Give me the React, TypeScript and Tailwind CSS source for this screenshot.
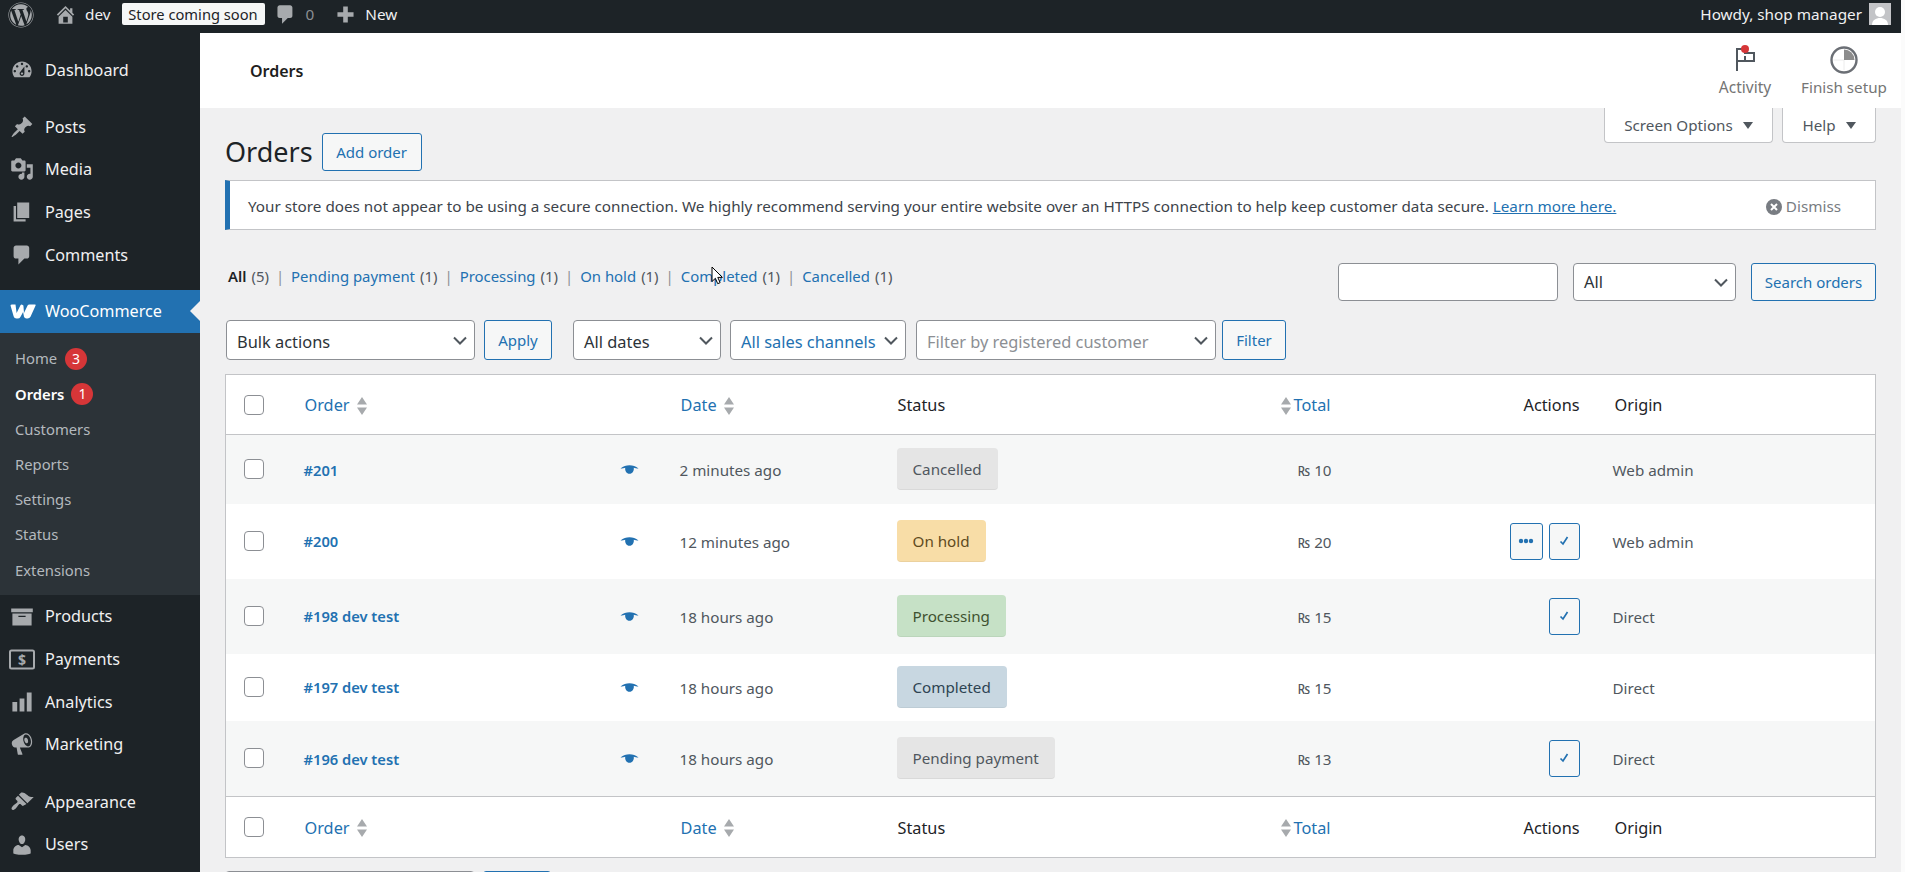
import React from "react";
import { FaWordpress } from "react-icons/fa";

const D: Record<string, string> = {
  dashboard:
    "M3.76 16h12.48c1.1-1.37 1.76-3.11 1.76-5 0-4.42-3.58-8-8-8s-8 3.58-8 8c0 1.89.66 3.63 1.76 5zM10 4c.55 0 1 .45 1 1s-.45 1-1 1-1-.45-1-1 .45-1 1-1zM6 6c.55 0 1 .45 1 1s-.45 1-1 1-1-.45-1-1 .45-1 1-1zm8 0c.55 0 1 .45 1 1s-.45 1-1 1-1-.45-1-1 .45-1 1-1zm-5.37 5.55L12 7v6c0 1.1-.9 2-2 2s-2-.9-2-2c0-.57.24-1.08.63-1.45zM4 10c.55 0 1 .45 1 1s-.45 1-1 1-1-.45-1-1 .45-1 1-1zm12 0c.55 0 1 .45 1 1s-.45 1-1 1-1-.45-1-1 .45-1 1-1zm-5 3c0-.55-.45-1-1-1s-1 .45-1 1 .45 1 1 1 1-.45 1-1z",
  post: "M10.44 3.02l1.82-1.82 6.36 6.35-1.83 1.82c-1.05-.68-2.48-.57-3.41.36l-.75.75c-.92.93-1.04 2.35-.35 3.41l-1.83 1.82-2.41-2.41-2.8 2.79c-.42.42-3.38 2.71-3.8 2.29s1.86-3.39 2.28-3.81l2.79-2.79L4.1 9.36l1.83-1.82c1.05.69 2.48.57 3.4-.36l.75-.75c.93-.92 1.05-2.35.36-3.41z",
  media:
    "M13 11V4c0-.55-.45-1-1-1h-1.67L9 1H5L3.67 3H2c-.55 0-1 .45-1 1v7c0 .55.45 1 1 1h10c.55 0 1-.45 1-1zM7 4.5c1.38 0 2.5 1.12 2.5 2.5S8.38 9.5 7 9.5 4.5 8.38 4.5 7 5.62 4.5 7 4.5zM14 6h5v10.5c0 1.38-1.12 2.5-2.5 2.5S14 17.88 14 16.5s1.12-2.5 2.5-2.5c.17 0 .34.02.5.05V9h-3V6zm-4 8.05V13h2v3.5c0 1.38-1.12 2.5-2.5 2.5S7 17.88 7 16.5 8.12 14 9.5 14c.17 0 .34.02.5.05z",
  page: "M6 15V2h10v13H6zm-1 1h8v2H3V5h2v11z",
  comment:
    "M5 2h9c1.1 0 2 .9 2 2v7c0 1.1-.9 2-2 2h-2l-5 5v-5H5c-1.1 0-2-.9-2-2V4c0-1.1.9-2 2-2z",
  home: "M16 8.5l1.53 1.53-1.06 1.06L10 4.62l-6.47 6.47-1.06-1.06L10 2.5l4 4v-2h2v4zm-6-2.46l6 5.99V18H4v-5.97zM12 17v-5H8v5h4z",
  plus: "M17 8v4h-5v5H8v-5H3V8h5V3h4v5h5z",
  archive: "M19 3v3H1V3h18zM2 7h16v10H2V7zm11 3V9H7v1h6z",
  chart: "M18 18V2h-4v16h4zm-6 0V7H8v11h4zm-6 0v-8H2v8h4z",
  megaphone:
    "M18.15 5.94c.46 1.62.38 3.22-.02 4.48-.42 1.28-1.26 2.18-2.3 2.48-.16.06-.26.06-.4.06-.06.02-.12.02-.18.02-.06.02-.14.02-.22.02H8.2l2.22 5.5c.02.14-.06.26-.14.34-.08.1-.24.16-.34.16H6.95c-.1 0-.26-.06-.34-.16-.08-.08-.16-.2-.14-.34l-1-5.5H4.25l-.02-.02c-.5.06-1.08-.18-1.54-.62s-.88-1.08-1.06-1.88c-.24-.8-.2-1.56-.02-2.2.2-.62.58-1.08 1.06-1.3l.02-.02 9-5.4c.1-.06.18-.1.24-.16.06-.04.14-.08.24-.12.16-.08.28-.12.5-.18 1.04-.3 2.24.1 3.22.98.98.9 1.84 2.24 2.26 3.86zm-2.58 5.98h-.02c.4-.1.74-.34 1.04-.7.58-.7.86-1.76.86-3.04-.02-.64-.1-1.3-.28-1.98-.34-1.36-1.02-2.5-1.78-3.24s-1.68-1.1-2.46-.88c-.82.22-1.4.96-1.7 2-.32 1.04-.28 2.36.06 3.72.38 1.36 1 2.5 1.8 3.24.78.74 1.62 1.1 2.48.88zm-2.54-7.08c.22-.04.42-.02.62.04.38.16.76.48 1.02 1s.42 1.2.42 1.78c0 .3-.04.56-.12.8-.18.48-.44.84-.86.94-.34.1-.8-.06-1.14-.4-.34-.32-.66-.8-.84-1.42-.32-.92-.3-1.92.12-2.4.24-.28.5-.34.78-.34z",
  brush:
    "M14.48 11.06L7.41 3.99l1.5-1.5c.5-.56 2.3-.47 3.51.32 1.21.8 1.43 1.28 2.91 2.1 1.18.64 2.45 1.26 4.45.85zm-.71.71L6.7 4.7 4.93 6.47c-.39.39-.39 1.02 0 1.41l1.06 1.06c.39.39.39 1.03 0 1.42-.6.6-1.43 1.11-2.21 1.69-.35.26-.7.53-1.01.84-1.34 1.34-1.9 2.72-1.2 3.42s2.08.14 3.42-1.2c.31-.31.58-.66.84-1.01.58-.78 1.09-1.61 1.69-2.21.39-.39 1.03-.39 1.42 0l1.06 1.06c.39.39 1.02.39 1.41 0z",
  users:
    "M10 9.25c-2.27 0-2.73-3.44-2.73-3.44C7 4.02 7.82 2 9.97 2c2.16 0 2.98 2.02 2.71 3.81 0 0-.41 3.44-2.68 3.44zm0 2.57L12.72 10c2.39 0 4.52 2.33 4.52 4.53v2.49s-3.65 1.13-7.24 1.13c-3.65 0-7.24-1.13-7.24-1.13v-2.49c0-2.25 1.94-4.48 4.47-4.48z",
};

function Dash({ n, className }: { n: string; className?: string }) {
  return (
    <svg viewBox="0 0 20 20" className={className} fill="currentColor" aria-hidden>
      <path d={D[n]} />
    </svg>
  );
}

function PaymentsIcon() {
  return (
    <svg viewBox="0 0 26 21" className="h-[21px] w-[26px] text-[#a7aaad]" aria-hidden>
      <rect x="1" y="1.5" width="24" height="18" rx="1.5" fill="none" stroke="currentColor" strokeWidth="2" />
      <text x="13" y="16" textAnchor="middle" fontSize="14" fontWeight="700" fontFamily="'Noto Sans',sans-serif" fill="currentColor">
        $
      </text>
    </svg>
  );
}

function WooIcon() {
  return (
    <svg viewBox="0 0 26 15" className="h-[15px] w-[26px] text-white" aria-hidden>
      <path
        fill="currentColor"
        d="M0.5 1.5 Q0.5 0.5 2 0.5 H5.5 L6.6 9 L10.6 1 Q11.3 0.3 12.2 0.7 L13.4 1.6 L14 9 L17.6 1.6 Q18 0.5 19.5 0.5 H25 Q26 0.5 25.6 1.6 L20.5 12.8 Q19.5 14.5 17.6 14.5 H16.4 Q14.6 14.5 14 12.8 L13.1 8 L10.4 13 Q9.6 14.5 7.6 14.5 H6.4 Q4.2 14.5 3.7 12.4 Z"
      />
    </svg>
  );
}

type Item = { label: string; icon: React.ReactNode };

function MenuRow({ label, icon }: { label: string; icon: React.ReactNode }) {
  return (
    <div className="flex h-[42.6px] items-center text-[16.2px] text-[#f0f0f1]">
      <span className="flex w-[45px] shrink-0 justify-center pr-[1px]">{icon}</span>
      <span>{label}</span>
    </div>
  );
}

const ic = "h-[24px] w-[24px] text-[#a7aaad]";

function Sidebar() {
  const sub = ["Home", "Orders", "Customers", "Reports", "Settings", "Status", "Extensions"];
  const group2: Item[] = [
    { label: "Posts", icon: <Dash n="post" className={ic} /> },
    { label: "Media", icon: <Dash n="media" className={ic} /> },
    { label: "Pages", icon: <Dash n="page" className={ic} /> },
    { label: "Comments", icon: <Dash n="comment" className={ic} /> },
  ];
  const group3: Item[] = [
    { label: "Products", icon: <Dash n="archive" className={ic} /> },
    { label: "Payments", icon: <PaymentsIcon /> },
    { label: "Analytics", icon: <Dash n="chart" className={ic} /> },
    { label: "Marketing", icon: <Dash n="megaphone" className={ic} /> },
  ];
  return (
    <aside className="w-[200px] shrink-0 bg-[#1d2327] pt-[16px]">
      <MenuRow label="Dashboard" icon={<Dash n="dashboard" className={ic} />} />
      <div className="mt-[14px]">
        {group2.map((g) => (
          <MenuRow key={g.label} label={g.label} icon={g.icon} />
        ))}
      </div>
      <div className="relative mt-[14px] flex h-[43px] items-center bg-[#2271b1] text-[16.2px] text-white">
        <span className="flex w-[45px] shrink-0 justify-center">
          <WooIcon />
        </span>
        <span>WooCommerce</span>
        <span className="absolute right-0 top-[11px] h-0 w-0 border-y-[10px] border-r-[10px] border-y-transparent border-r-[#f0f0f1]" />
      </div>
      <div className="bg-[#2c3338] pb-[8px] pt-[8px]">
        {sub.map((s) => (
          <div
            key={s}
            className={`flex h-[35.2px] items-center pl-[15px] text-[14.8px] ${
              s === "Orders" ? "font-semibold text-white" : "text-[#b4b9be]"
            }`}
          >
            <span>{s}</span>
            {s === "Home" && (
              <span className="ml-[8px] flex h-[22px] w-[22px] items-center justify-center rounded-full bg-[#d63638] text-[14px] font-normal text-white">
                3
              </span>
            )}
            {s === "Orders" && (
              <span className="ml-[7px] flex h-[22px] w-[22px] items-center justify-center rounded-full bg-[#d63638] text-[14px] font-normal text-white">
                1
              </span>
            )}
          </div>
        ))}
      </div>
      {group3.map((g) => (
        <MenuRow key={g.label} label={g.label} icon={g.icon} />
      ))}
      <div className="mt-[15px]">
        <MenuRow label="Appearance" icon={<Dash n="brush" className={ic} />} />
        <MenuRow label="Users" icon={<Dash n="users" className={ic} />} />
      </div>
    </aside>
  );
}

function TopBar() {
  return (
    <header className="flex h-[33px] items-center bg-[#1d2327] pb-[5px] text-[15.3px] text-[#f0f0f1]">
      <FaWordpress className="ml-[8px] mt-[1px] h-[26px] w-[26px] text-[#a7aaad]" />
      <Dash n="home" className="ml-[20px] h-[23px] w-[23px] text-[#a7aaad]" />
      <span className="ml-[8px]">dev</span>
      <span className="ml-[11px] flex h-[22px] w-[143px] items-center justify-center rounded-[2px] bg-[#f6f7f7] text-[14.7px] text-[#1d2327]">
        Store coming soon
      </span>
      <Dash n="comment" className="ml-[9px] h-[23px] w-[23px] text-[#a7aaad]" />
      <span className="ml-[9px] text-[#8c8f94]">0</span>
      <Dash n="plus" className="ml-[20px] h-[23px] w-[23px] text-[#a7aaad]" />
      <span className="ml-[8px]">New</span>
      <span className="ml-auto">Howdy, shop manager</span>
      <span className="ml-[7px] mr-[10px] flex h-[22px] w-[22px] items-end justify-center overflow-hidden bg-[#c3c4c7]">
        <svg viewBox="0 0 22 22" className="h-[22px] w-[22px]" aria-hidden>
          <circle cx="11" cy="9" r="5" fill="#fff" />
          <path d="M3 22c0-5 4-7 8-7s8 2 8 7z" fill="#fff" />
        </svg>
      </span>
    </header>
  );
}

function WooHeader() {
  return (
    <div className="flex h-[75px] items-center bg-white pl-[50px] pr-[14px]">
      <span className="text-[16px] font-semibold text-[#1e1e1e]">Orders</span>
      <div className="ml-auto flex items-start gap-[26px]">
        <div className="flex w-[60px] flex-col items-center text-[#757575]">
          <span className="relative block h-[32px] w-[24px]">
            <svg viewBox="0 0 24 24" className="mt-[6px] h-[24px] w-[24px]" fill="none" stroke="#50575e" strokeWidth="2" aria-hidden>
              <path d="M4 24V2h8v4h9v8h-9V9" />
              <path d="M4 14h8" />
            </svg>
            <span className="absolute left-[8px] top-[4px] h-[8px] w-[8px] rounded-full bg-[#d63638]" />
          </span>
          <span className="mt-[3px] whitespace-nowrap text-[15.5px]">Activity</span>
        </div>
        <div className="flex w-[86px] flex-col items-center text-[#757575]">
          <svg viewBox="0 0 30 30" className="mt-[4px] h-[30px] w-[30px]" aria-hidden>
            <circle cx="15" cy="15" r="12.500" fill="none" stroke="#6b6f75" strokeWidth="2.400" />
            <path d="M15 15V4.500A10.500 10.500 0 0 1 25.500 15z" fill="#8c8c8c" />
            <path d="M15 15v10M15 15H4.500" stroke="#ececec" strokeWidth="1" />
          </svg>
          <span className="mt-[1px] whitespace-nowrap text-[15.200px]">Finish setup</span>
        </div>
      </div>
    </div>
  );
}

function Chevron({ className }: { className?: string }) {
  return (
    <svg viewBox="0 0 14 9" className={`h-[9px] w-[14px] ${className ?? ""}`} fill="none" stroke="#50575e" strokeWidth="2" aria-hidden>
      <path d="M1 1.500l6 6 6-6" />
    </svg>
  );
}

function Select({ text, w, color }: { text?: string; w: string; color?: string }) {
  return (
    <div className={`flex h-[40px] items-center justify-between rounded-[4px] border border-[#8c8f94] bg-white pl-[10px] pr-[7px] ${w}`}>
      <span className={`whitespace-nowrap pt-[4px] text-[16.4px] ${color ?? "text-[#2c3338]"}`}>{text}</span>
      <Chevron />
    </div>
  );
}

function Btn({ text, w, h }: { text: string; w: string; h?: string }) {
  return (
    <button className={`flex items-center justify-center rounded-[3px] border border-[#2271b1] bg-[#f6f7f7] pt-[1px] text-[15px] text-[#2271b1] ${w} ${h ?? "h-[40px]"}`}>
      {text}
    </button>
  );
}

function Sort() {
  return (
    <svg viewBox="0 0 10 18" className="h-[18px] w-[10px] text-[#a7aaad]" fill="currentColor" aria-hidden>
      <path d="M5 0l5 7.500H0zM5 18L0 10.500h10z" />
    </svg>
  );
}

function Box() {
  return (
    <input
      type="checkbox"
      readOnly
      className="block h-[20px] w-[20px] appearance-none rounded-[4px] border border-[#8c8f94] bg-white"
    />
  );
}

function HeadRow({ top }: { top?: boolean }) {
  const th = "pt-[2px] text-left text-[16.3px] font-normal";
  return (
    <tr className={top ? "h-[60px] border-b border-[#c3c4c7]" : "h-[61px] border-t border-[#c3c4c7]"}>
      <th className="pl-[18px]">
        <Box />
      </th>
      <th className={`${th} pl-[13px]`} colSpan={2}>
        <span className="flex items-center gap-[7px] text-[#2271b1]">
          Order <Sort />
        </span>
      </th>
      <th className={`${th} pl-[16px]`}>
        <span className="flex items-center gap-[7px] text-[#2271b1]">
          Date <Sort />
        </span>
      </th>
      <th className={`${th} pl-[16px] text-[#1d2327]`}>Status</th>
      <th className={`${th} pr-[14px]`}>
        <span className="flex items-center justify-end gap-[3px] text-[#2271b1]">
          <Sort /> Total
        </span>
      </th>
      <th className={`${th} pr-[18px] text-right text-[#1d2327]`}>Actions</th>
      <th className={`${th} pl-[17px] text-[#1d2327]`}>Origin</th>
    </tr>
  );
}

function Eye() {
  return (
    <svg viewBox="0 0 20 9" className="mx-auto h-[9px] w-[19px] text-[#2271b1]" fill="currentColor" aria-hidden>
      <path d="M0.500 3.500C3.500 1 6.500 0 10 0s6.500 1 9.500 3.500C17.500 3.200 15.500 2.800 14.500 2.600 15 6 13 9 10 9S5 6 5.500 2.600C4.500 2.800 2.500 3.200 0.500 3.500z" />
    </svg>
  );
}

function ActionBtn({ kind }: { kind: "dots" | "check" }) {
  return (
    <span
      className={`flex h-[37px] items-center justify-center rounded-[3px] border border-[#2271b1] bg-[#f6f7f7] ${
        kind === "dots" ? "w-[33px]" : "w-[31px]"
      }`}
    >
      {kind === "dots" ? (
        <svg viewBox="0 0 16 6" className="mb-[1px] h-[6px] w-[16px]" fill="#2271b1" aria-hidden>
          <circle cx="3" cy="3" r="2.200" />
          <circle cx="8" cy="3" r="2.200" />
          <circle cx="13" cy="3" r="2.200" />
        </svg>
      ) : (
        <svg viewBox="0 0 10 10" className="mb-[1px] h-[10px] w-[10px]" fill="none" stroke="#2271b1" strokeWidth="1.700" aria-hidden>
          <path d="M1.500 5.500l2.500 2.500 4.500-7" />
        </svg>
      )}
    </span>
  );
}

type Row = {
  id: string;
  date: string;
  status: string;
  badge: string;
  total: string;
  origin: string;
  actions: ("dots" | "check")[];
  rowCls: string;
};

const rows: Row[] = [
  { id: "#201", date: "2 minutes ago", status: "Cancelled", badge: "bg-[#e5e5e5] text-[#50575e]", total: "₨ 10", origin: "Web admin", actions: [], rowCls: "h-[69px] bg-[#f6f7f7]" },
  { id: "#200", date: "12 minutes ago", status: "On hold", badge: "bg-[#f8dda7] text-[#5f4a1e]", total: "₨ 20", origin: "Web admin", actions: ["dots", "check"], rowCls: "h-[75px] bg-white" },
  { id: "#198 dev test", date: "18 hours ago", status: "Processing", badge: "bg-[#c6e1c6] text-[#3f5230]", total: "₨ 15", origin: "Direct", actions: ["check"], rowCls: "h-[75px] bg-[#f6f7f7]" },
  { id: "#197 dev test", date: "18 hours ago", status: "Completed", badge: "bg-[#c8d7e1] text-[#2e4453]", total: "₨ 15", origin: "Direct", actions: [], rowCls: "h-[67px] bg-white" },
  { id: "#196 dev test", date: "18 hours ago", status: "Pending payment", badge: "bg-[#e5e5e5] text-[#50575e]", total: "₨ 13", origin: "Direct", actions: ["check"], rowCls: "h-[76px] bg-[#f6f7f7]" },
];

function OrdersTable() {
  return (
    <table className="mt-[14px] w-full table-fixed border-collapse border border-[#c3c4c7] bg-white">
      <colgroup>
        <col className="w-[66px]" />
        <col className="w-[303px]" />
        <col className="w-[70px]" />
        <col className="w-[217px]" />
        <col className="w-[318px]" />
        <col className="w-[145px]" />
        <col className="w-[253px]" />
        <col />
      </colgroup>
      <thead>
        <HeadRow top />
      </thead>
      <tbody>
        {rows.map((r) => (
          <tr key={r.id} className={r.rowCls}>
            <td className="pl-[18px]">
              <Box />
            </td>
            <td className="pl-[12px] pt-[1px] text-[14.700px] font-semibold text-[#2271b1]">{r.id}</td>
            <td>
              <Eye />
            </td>
            <td className="pl-[15px] pt-[3px] text-[15.200px] text-[#50575e]">{r.date}</td>
            <td className="pl-[15px]">
              <span className={`inline-flex h-[42px] items-center rounded-[4px] border-b border-black/5 px-[16px] pt-[1px] text-[15.200px] ${r.badge}`}>
                {r.status}
              </span>
            </td>
            <td className="pr-[13px] pt-[3px] text-right text-[15.200px] text-[#50575e]">{r.total}</td>
            <td className="pr-[18px]">
              <div className="flex justify-end gap-[6px]">
                {r.actions.map((a, i) => (
                  <ActionBtn key={i} kind={a} />
                ))}
              </div>
            </td>
            <td className="pl-[15px] pt-[3px] text-[15.200px] text-[#50575e]">{r.origin}</td>
          </tr>
        ))}
      </tbody>
      <tfoot>
        <HeadRow />
      </tfoot>
    </table>
  );
}

function Filters() {
  const links = [
    ["Pending payment", "(1)"],
    ["Processing", "(1)"],
    ["On hold", "(1)"],
    ["Completed", "(1)"],
    ["Cancelled", "(1)"],
  ];
  return (
    <div className="mt-[33px] flex h-[38px] items-start justify-between">
      <div className="ml-[3px] mt-[2px] flex items-center text-[14.900px] text-[#50575e]">
        <span className="font-semibold text-[#1d2327]">All</span>
        <span className="ml-[5px]">(5)</span>
        {links.map(([a, b]) => (
          <span key={a} className="flex items-center">
            <span className="mx-[7px] text-[#8c8f94]">|</span>
            <span className="text-[#2271b1]">{a}</span>
            <span className="ml-[5px]">{b}</span>
          </span>
        ))}
      </div>
      <div className="flex items-center">
        <input className="h-[38px] w-[220px] rounded-[4px] border border-[#8c8f94] bg-white" readOnly />
        <div className="ml-[15px] flex h-[38px] w-[163px] items-center justify-between rounded-[4px] border border-[#8c8f94] bg-white pl-[10px] pr-[7px]">
          <span className="pt-[1px] text-[16.400px] text-[#2c3338]">All</span>
          <Chevron />
        </div>
        <div className="ml-[15px]">
          <Btn text="Search orders" w="w-[125px]" h="h-[38px]" />
        </div>
      </div>
    </div>
  );
}

export default function App() {
  return (
    <div className="relative flex h-[872px] w-[1905px] overflow-hidden bg-[#fbfbfb] font-['Noto_Sans',sans-serif]">
      <div className="flex w-[1901px] shrink-0 flex-col bg-[#f0f0f1]">
        <TopBar />
        <div className="flex min-h-0 flex-1">
          <Sidebar />
          <main className="min-w-0 flex-1">
            <WooHeader />
            <div className="px-[25px]">
              <div className="flex justify-end gap-[9px] text-[15.200px] text-[#50575e]">
                <div className="flex h-[35px] w-[169px] items-center justify-center gap-[10px] rounded-b-[4px] border border-t-0 border-[#c3c4c7] bg-white pt-[1px]">
                  Screen Options <span className="h-0 w-0 border-x-[5px] border-t-[7px] border-x-transparent border-t-[#50575e]" />
                </div>
                <div className="flex h-[35px] w-[94px] items-center justify-center gap-[10px] rounded-b-[4px] border border-t-0 border-[#c3c4c7] bg-white pt-[1px]">
                  Help <span className="h-0 w-0 border-x-[5px] border-t-[7px] border-x-transparent border-t-[#50575e]" />
                </div>
              </div>
              <div className="mt-[-10px] flex h-[38px] items-center gap-[9px]">
                <h1 className="text-[27px] font-normal text-[#1d2327]">Orders</h1>
                <Btn text="Add order" w="w-[100px]" h="h-[38px]" />
              </div>
              <div className="mt-[9px] flex h-[50px] items-center border border-l-[5px] border-[#c3c4c7] border-l-[#2271b1] bg-white pl-[18px] pr-[34px] pt-[3px] text-[15.250px] text-[#3c434a]">
                <span>
                  Your store does not appear to be using a secure connection. We highly recommend serving your entire website over an HTTPS connection to help keep customer data secure.{" "}
                  <span className="text-[#2271b1] underline">Learn more here.</span>
                </span>
                <span className="ml-auto flex items-center gap-[4px] text-[#787c82]">
                  <svg viewBox="0 0 16 16" className="h-[16px] w-[16px]" aria-hidden>
                    <circle cx="8" cy="8" r="8" fill="#787c82" />
                    <path d="M5 5l6 6M11 5l-6 6" stroke="#fff" strokeWidth="2" />
                  </svg>
                  Dismiss
                </span>
              </div>
              <Filters />
              <div className="ml-[1px] mt-[19px] flex items-center">
                <Select text="Bulk actions" w="w-[249px]" />
                <div className="ml-[9px]">
                  <Btn text="Apply" w="w-[68px]" />
                </div>
                <div className="ml-[21px]">
                  <Select text="All dates" w="w-[148px]" />
                </div>
                <div className="ml-[9px]">
                  <Select text="All sales channels" w="w-[176px]" color="text-[#2271b1]" />
                </div>
                <div className="ml-[10px]">
                  <Select text="Filter by registered customer" w="w-[300px]" color="text-[#8c8f94]" />
                </div>
                <div className="ml-[6px]">
                  <Btn text="Filter" w="w-[64px]" />
                </div>
              </div>
              <OrdersTable />
              <div className="mt-[13px] flex items-center gap-[8px]">
                <div className="h-[40px] w-[250px] rounded-[4px] border border-[#8c8f94] bg-white" />
                <div className="h-[40px] w-[68px] rounded-[3px] border border-[#2271b1] bg-[#f6f7f7]" />
              </div>
            </div>
          </main>
        </div>
      </div>
      <svg viewBox="0 0 12 19" className="absolute left-[711px] top-[266px] h-[19px] w-[12px]" aria-hidden>
        <path d="M1 1v14.500l3.400-3.200 2.300 5.400 2.400-1-2.300-5.300h4.600z" fill="#fff" stroke="#000" strokeWidth="1" />
      </svg>
    </div>
  );
}
